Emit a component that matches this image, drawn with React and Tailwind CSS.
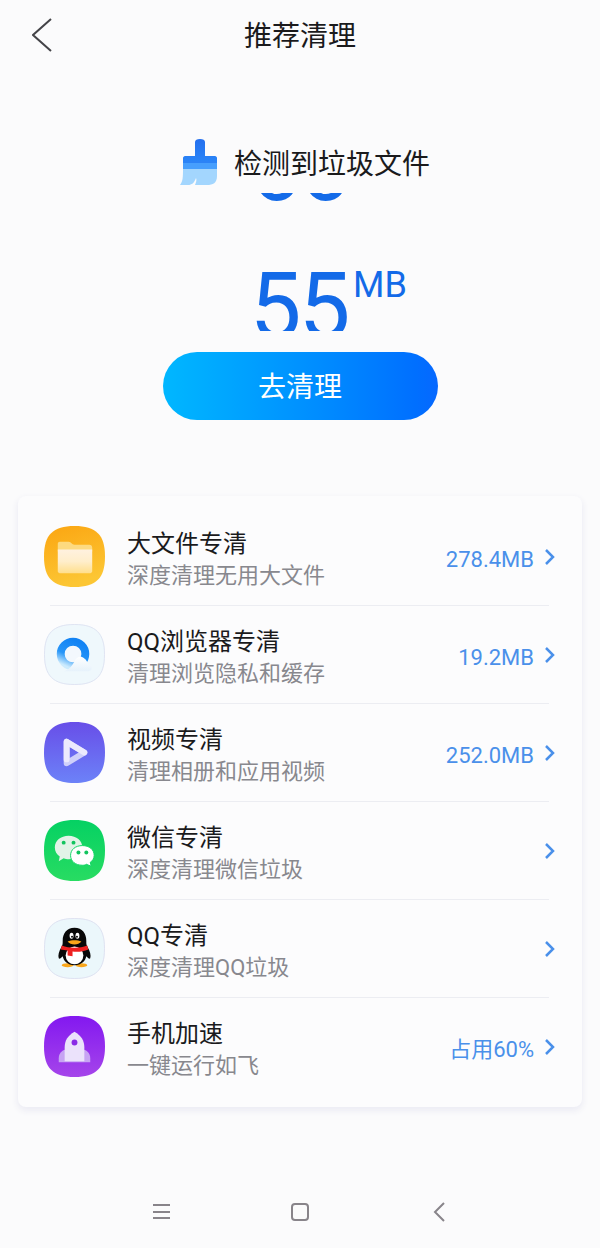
import React from "react";

const TILE = "M31 0C53 0 62 9 62 31S53 62 31 62 0 53 0 31 9 0 31 0Z";
const TILE_EDGE =
  "M31 .5C52.6 .5 61.5 9.4 61.5 31S52.6 61.5 31 61.5 .5 52.6 .5 31 9.4 .5 31 .5Z";

/* ===== IKON ===== */
const FolderIcon = () => (
  <svg viewBox="0 0 62 62" className="size-[61px]" aria-hidden="true">
    <defs>
      <linearGradient id="folderBg" x1="0" y1="0" x2="0.3" y2="1">
        <stop offset="0" stopColor="#fba511" />
        <stop offset="1" stopColor="#fcc634" />
      </linearGradient>
      <linearGradient id="folderFront" x1="0" y1="0" x2="0" y2="1">
        <stop offset="0" stopColor="#fff1df" />
        <stop offset="0.5" stopColor="#ffeecb" />
        <stop offset="1" stopColor="#ffdf8c" />
      </linearGradient>
    </defs>
    <path d={TILE} fill="url(#folderBg)" />
    <path
      d="M16 16h9c3 0 3 3 6 3h15c2 0 3 1 3 3v4H14v-8c0-1 1-2 2-2Z"
      fill="#fdda80"
    />
    <path d="M14 24h35v22c0 1-1 2-2 2H16c-1 0-2-1-2-2Z" fill="url(#folderFront)" />
  </svg>
);

const BrowserIcon = () => (
  <svg viewBox="0 0 62 62" className="size-[61px]" aria-hidden="true">
    <defs>
      <linearGradient id="ring" x1="0.7" y1="0" x2="0.25" y2="1">
        <stop offset="0" stopColor="#1283f4" />
        <stop offset="0.6" stopColor="#2796f8" />
        <stop offset="1" stopColor="#cdebfd" />
      </linearGradient>
      <linearGradient id="cloud" x1="0" y1="0" x2="0" y2="1">
        <stop offset="0" stopColor="#ffffff" />
        <stop offset="1" stopColor="#e6f2fb" />
      </linearGradient>
    </defs>
    <path d={TILE} fill="#eff8fc" />
    <path d={TILE_EDGE} fill="none" stroke="#dfe3f2" />
    <circle cx="29.5" cy="30.5" r="12.5" fill="#f3f8fd" stroke="url(#ring)" strokeWidth="8" />
    <path
      d="M20 48c5-1 8-5 11-10 2-5 7-6 10-3 2 1 3 4 4 6 5 0 5 7 0 7Z"
      fill="url(#cloud)"
    />
  </svg>
);

const VideoIcon = () => (
  <svg viewBox="0 0 62 62" className="size-[61px]" aria-hidden="true">
    <defs>
      <linearGradient id="videoBg" x1="0" y1="0" x2="0" y2="1">
        <stop offset="0" stopColor="#684ee8" />
        <stop offset="1" stopColor="#6c82f8" />
      </linearGradient>
    </defs>
    <path d={TILE} fill="url(#videoBg)" />
    <path
      d="M23 20v22l18-11Z"
      fill="none"
      stroke="#cfd0fa"
      strokeWidth="6"
      strokeLinejoin="round"
    />
    <path
      d="M23 38V20l18 11"
      fill="none"
      stroke="#eceafd"
      strokeWidth="6"
      strokeLinecap="round"
      strokeLinejoin="round"
    />
  </svg>
);

const WechatIcon = () => (
  <svg viewBox="0 0 62 62" className="size-[61px]" aria-hidden="true">
    <defs>
      <linearGradient id="wechatBg" x1="0" y1="0" x2="0" y2="1">
        <stop offset="0" stopColor="#05d163" />
        <stop offset="1" stopColor="#28dc62" />
      </linearGradient>
    </defs>
    <path d={TILE} fill="url(#wechatBg)" />
    <path
      d="M25 16c8 0 14 5 14 12s-6 12-14 12c-2 0-3 0-5-1l-5 3 1-5c-3-2-5-5-5-9 0-7 6-12 14-12Z"
      fill="#e2f3e7"
    />
    <circle cx="20" cy="23" r="2" fill="#12c45e" />
    <circle cx="30" cy="23" r="2" fill="#12c45e" />
    <path
      d="M39 26c7 0 12 4 12 10 0 3-2 6-4 7l1 4-5-2c-1 1-3 1-4 1-7 0-12-4-12-10s5-10 12-10Z"
      fill="#fff"
      stroke="#0fd663"
      strokeWidth="1"
    />
    <circle cx="35" cy="33" r="2" fill="#12c45e" />
    <circle cx="43" cy="33" r="2" fill="#12c45e" />
  </svg>
);

const QQIcon = () => (
  <svg viewBox="0 0 62 62" className="size-[61px]" aria-hidden="true">
    <path d={TILE} fill="#ebf7fb" />
    <path d={TILE_EDGE} fill="none" stroke="#dfe1f1" />
    <ellipse cx="24" cy="48" rx="6" ry="2" fill="#f9a61a" />
    <ellipse cx="38" cy="48" rx="6" ry="2" fill="#f9a61a" />
    <path
      d="M31 10c8 0 12 6 12 13 0 3 0 4 1 6 3 5 4 9 3 12-1 1-2 0-4-2-1 5-5 9-12 9s-11-4-12-9c-2 2-3 3-4 2-1-3 0-7 3-12 1-2 1-3 1-6 0-7 4-13 12-13Z"
      fill="#080808"
    />
    <ellipse cx="31" cy="38" rx="9" ry="9" fill="#fff" />
    <ellipse cx="28" cy="18" rx="2" ry="3" fill="#fff" />
    <ellipse cx="34" cy="18" rx="2" ry="3" fill="#fff" />
    <circle cx="28.5" cy="19" r="1" fill="#000" />
    <circle cx="33.5" cy="19" r="1" fill="#000" />
    <path d="M24 24c4-2 10-2 14 0-3 4-11 4-14 0Z" fill="#f9a61a" />
    <path d="M18 28c8 3 18 3 26 0l1 4c-5 2-11 3-16 2v5l-5-1v-5l-7-1Z" fill="#ee2020" />
  </svg>
);

const RocketIcon = () => (
  <svg viewBox="0 0 62 62" className="size-[61px]" aria-hidden="true">
    <defs>
      <linearGradient id="rocketBg" x1="0" y1="0" x2="0" y2="1">
        <stop offset="0" stopColor="#8318f0" />
        <stop offset="1" stopColor="#a545ea" />
      </linearGradient>
    </defs>
    <path d={TILE} fill="url(#rocketBg)" />
    <path d="M22 34c-4 1-7 4-7 9v4h32v-4c0-5-3-8-7-9Z" fill="#c7a4f3" />
    <path
      d="M31 16c7 4 10 9 10 16v14H21V32c0-7 3-12 10-16Z"
      fill="#ebe2fb"
    />
    <circle cx="31" cy="27" r="3" fill="#8a2be6" />
  </svg>
);

const BrushIcon = () => (
  <svg viewBox="0 0 38 48" className="w-[38px] h-12" aria-hidden="true">
    <defs>
      <linearGradient id="handle" x1="0" y1="0" x2="0" y2="1">
        <stop offset="0" stopColor="#246fee" />
        <stop offset="1" stopColor="#2c8dfb" />
      </linearGradient>
    </defs>
    <path
      d="M15 4c0-2 2-3 5-3s5 1 5 3v14h10c1 0 2 1 2 2v12H3V20c0-1 1-2 2-2h10Z"
      fill="url(#handle)"
    />
    <path
      d="M3 30h34v8c0 7-4 9-10 9H15c1-3 2-5 1-7-2 5-4 7-8 7H0c3-4 3-8 3-17Z"
      fill="#a3d6fe"
    />
    <path d="M3 24h34v7H3Z" fill="#479ffd" />
    <path d="M3 23h34v2H3Z" fill="#2c83f6" />
  </svg>
);

const Arrow = () => (
  <svg viewBox="0 0 12 18" className="w-3 h-[18px] mt-px shrink-0" aria-hidden="true">
    <path d="M2 2l7 7-7 7" fill="none" stroke="#4a90ea" strokeWidth="2.5" />
  </svg>
);

const items = [
  { title: "大文件专清", desc: "深度清理无用大文件", value: "278.4MB", Icon: FolderIcon },
  { title: "QQ浏览器专清", desc: "清理浏览隐私和缓存", value: "19.2MB", Icon: BrowserIcon },
  { title: "视频专清", desc: "清理相册和应用视频", value: "252.0MB", Icon: VideoIcon },
  { title: "微信专清", desc: "深度清理微信垃圾", value: "", Icon: WechatIcon },
  { title: "QQ专清", desc: "深度清理QQ垃圾", value: "", Icon: QQIcon },
  { title: "手机加速", desc: "一键运行如飞", value: "占用60%", Icon: RocketIcon },
];

/* Satu kolom angka yang sedang bergulir */
const Digit = ({ from, to }) => (
  <span className="flex flex-col items-center w-[49px] h-[138px] overflow-hidden text-[92px] leading-[138px]">
    <span className="-mt-[93px]" aria-hidden="true">
      {from}
    </span>
    <span>{to}</span>
  </span>
);

const App = () => {
  return (
    <div className="flex flex-col min-h-screen bg-[#fbfbfc] text-[#1a1a1c] font-[Roboto,'Noto_Sans_CJK_SC',sans-serif]">
      {/* ===== HEADER ===== */}
      <header className="grid grid-cols-[1fr_auto_1fr] items-center h-[70px] px-8">
        <button aria-label="返回" className="justify-self-start">
          <svg viewBox="0 0 20 34" className="w-5 h-[34px]" aria-hidden="true">
            <path d="M19 1L1 17l18 16" fill="none" stroke="#444448" strokeWidth="2" />
          </svg>
        </button>
        <h1 className="pt-1 text-[28px] leading-9">推荐清理</h1>
      </header>

      {/* ===== HASIL PINDAI ===== */}
      <section className="flex flex-col items-center pt-[68px]">
        <div className="flex items-center h-12 gap-4 pl-2.5">
          <BrushIcon />
          <h2 className="pt-1.5 text-[28px] leading-9">检测到垃圾文件</h2>
        </div>
        <div className="flex mt-[7px] pl-[58px] text-[#136ae8]">
          <Digit from="6" to="5" />
          <Digit from="6" to="5" />
          <span className="pl-1 pt-[70px] text-[36px] leading-[44px]">MB</span>
        </div>
        <button className="w-[275px] h-[68px] pt-1 mt-[21px] rounded-full bg-linear-to-r from-[#00b7ff] to-[#0668ff] text-[28px] text-white">
          去清理
        </button>
      </section>

      {/* ===== DAFTAR ===== */}
      <ul className="mx-[18px] mt-[76px] py-3 rounded-lg bg-[#fcfcfd] shadow-[0_3px_6px_1px_#ececf4]">
        {items.map(({ title, desc, value, Icon }, i) => (
          <li key={title}>
            {i > 0 && <hr className="ml-8 mr-[33px] border-[#ecedf2]" />}
            <button className="flex items-center w-full h-[97px] px-[26px] text-left">
              <Icon />
              <span className="flex-1 flex flex-col pl-[22px] pt-1.5">
                <span className="text-2xl leading-8">{title}</span>
                <span className="text-[22px] leading-8 text-[#88888e]">{desc}</span>
              </span>
              <span className="pr-2.5 pt-1.5 text-[22px] leading-8 text-[#4a90ea]">{value}</span>
              <Arrow />
            </button>
          </li>
        ))}
      </ul>

      {/* ===== NAVIGASI SISTEM ===== */}
      <nav className="grid grid-cols-3 w-[416px] h-[72px] mt-auto mx-auto">
        <button aria-label="菜单" className="grid place-items-center">
          <svg viewBox="0 0 20 20" className="size-5" aria-hidden="true">
            <path d="M2 3h17M2 10h17M2 16h17" stroke="#88848a" strokeWidth="2" />
          </svg>
        </button>
        <button aria-label="主页" className="grid place-items-center">
          <svg viewBox="0 0 20 20" className="size-5" aria-hidden="true">
            <rect x="2" y="2" width="16" height="16" rx="3" fill="none" stroke="#88848a" strokeWidth="2" />
          </svg>
        </button>
        <button aria-label="后退" className="grid place-items-center">
          <svg viewBox="0 0 20 20" className="size-5" aria-hidden="true">
            <path d="M15 1L6 10l9 9" fill="none" stroke="#88848a" strokeWidth="2" />
          </svg>
        </button>
      </nav>
    </div>
  );
};

export default App;
